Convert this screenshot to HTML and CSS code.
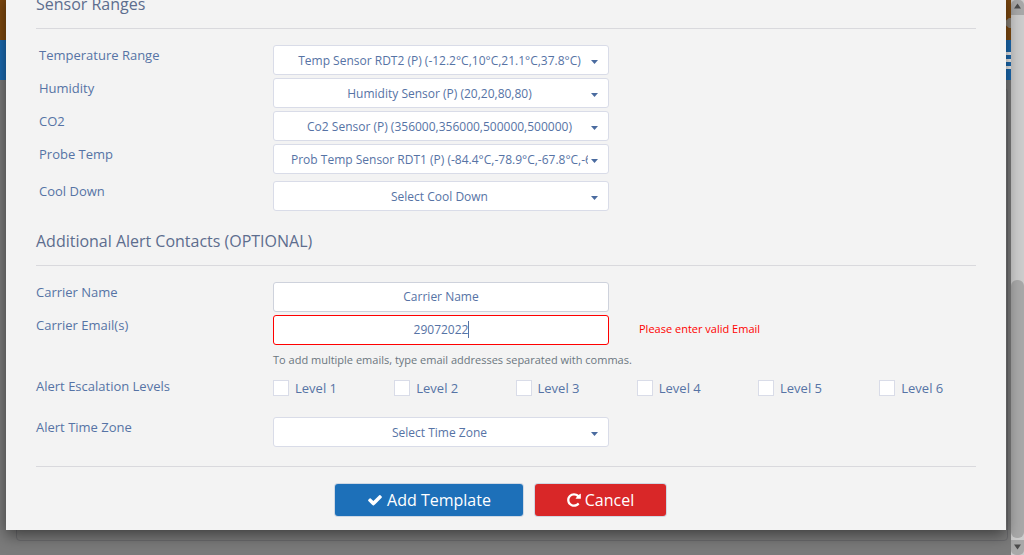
FILE: index.html
```html
<!DOCTYPE html>
<html lang="en">
<head>
<meta charset="utf-8">
<title>Add Template</title>
<link rel="stylesheet" href="styles.css">
</head>
<body>
<div class="page">
  <div class="topbar"><svg class="user" width="8" height="10" viewBox="0 0 8 10"><path d="M0 5L6 0H8V10H6Z" fill="#8b8277"/></svg></div>
  <div class="navbar"><span class="burger"><i></i><i></i><i></i></span></div>
  <div class="panel"></div>
</div>
<div class="scrollbar">
  <div class="sb-btn"><svg width="13" height="15" viewBox="0 0 13 15"><path d="M6.5 3.5L10 8.5H3Z" fill="#4c4c4c"/></svg></div>
  <div class="sb-thumb"></div>
  <div class="sb-btn sb-down"><svg width="13" height="15" viewBox="0 0 13 15"><path d="M3 4.500H10L6.500 9.500Z" fill="#4c4c4c"/></svg></div>
</div>
<main class="modal">
  <h2 class="title first">Sensor Ranges</h2>
  <section class="rows indent">
    <div class="row"><label>Temperature Range</label><div class="field select"><span>Temp Sensor RDT2 (P) (-12.2°C,10°C,21.1°C,37.8°C)</span></div></div>
    <div class="row"><label>Humidity</label><div class="field select"><span>Humidity Sensor (P) (20,20,80,80)</span></div></div>
    <div class="row"><label>CO2</label><div class="field select"><span>Co2 Sensor (P) (356000,356000,500000,500000)</span></div></div>
    <div class="row"><label>Probe Temp</label><div class="field select overflow"><span>Prob Temp Sensor RDT1 (P) (-84.4°C,-78.9°C,-67.8°C,-62.2°C)</span></div></div>
    <div class="row cool"><label>Cool Down</label><div class="field select"><span>Select Cool Down</span></div></div>
  </section>
  <h2 class="title">Additional Alert Contacts (OPTIONAL)</h2>
  <section class="rows">
    <div class="row"><label>Carrier Name</label><div class="field input"><span>Carrier Name</span></div></div>
    <div class="row"><label>Carrier Email(s)</label><div class="field input invalid"><span>29072022</span><b class="caret"></b></div><p class="error">Please enter valid Email</p></div>
  </section>
  <p class="help">To add multiple emails, type email addresses separated with commas.</p>
  <div class="row levels"><label>Alert Escalation Levels</label>
    <div class="checks">
      <span class="check"><i></i>Level 1</span><span class="check"><i></i>Level 2</span><span class="check"><i></i>Level 3</span><span class="check"><i></i>Level 4</span><span class="check"><i></i>Level 5</span><span class="check"><i></i>Level 6</span>
    </div>
  </div>
  <div class="row zone"><label>Alert Time Zone</label><div class="field select"><span>Select Time Zone</span></div></div>
  <footer class="actions">
    <button class="btn add"><svg width="16" height="16" viewBox="0 0 1792 1792"><path fill="#fff" d="M1671 566q0 40-28 68l-724 724-136 136q-28 28-68 28t-68-28l-136-136-362-362q-28-28-28-68t28-68l136-136q28-28 68-28t68 28l294 295 656-657q28-28 68-28t68 28l136 136q28 28 28 68z"/></svg><span>Add Template</span></button>
    <button class="btn cancel"><svg width="16" height="16" viewBox="0 0 1792 1792"><path fill="#fff" d="M1664 256v448q0 26-19 45t-45 19h-448q-42 0-59-40-17-39 14-69l138-138q-148-137-349-137-104 0-198.500 40.500t-163.500 109.500-109.500 163.500-40.500 198.500 40.500 198.500 109.500 163.500 163.500 109.500 198.500 40.500q119 0 225-52t179-147q7-10 23-12 15 0 25 9l137 138q9 8 9.500 20.500t-7.500 22.500q-109 132-264 204.500t-327 72.500q-156 0-298-61t-245-164-164-245-61-298 61-298 164-245 245-164 298-61q147 0 284.500 55.500t244.500 156.500l130-129q29-31 70-14 39 17 39 59z"/></svg><span>Cancel</span></button>
  </footer>
</main>
</body>
</html>
```
FILE: styles.css
```css
* { box-sizing: border-box; }
body { margin: 0; width: 1024px; height: 555px; overflow: hidden; position: relative; background: #7b7b7b; font-family: "Open Sans", sans-serif; font-size: 13px; color: #5673a5; }
.page { width: 1011px; height: 555px; background: #7b7b7b; overflow: hidden; }
.topbar { height: 40px; background: #804a0f; display: flex; justify-content: flex-end; padding: 18px 0 0; }
.navbar { height: 40px; background: #1b6bb3; display: flex; justify-content: flex-end; padding-top: 12px; }
.burger { display: flex; flex-direction: column; gap: 4px; width: 5px; }
.burger i { height: 3px; background: #f0f0f0; }
.panel { margin: 8px 3px 0 16px; height: 453px; border: 1px solid #6b6b6e; border-radius: 4px; }
.scrollbar { position: absolute; right: 0; top: 0; width: 13px; height: 555px; background: #cdcdcd; display: flex; flex-direction: column; }
.sb-btn { height: 15px; background: #a9a9a9; border-radius: 5px 5px 0 0; }
.sb-btn svg { display: block; }
.sb-down { border-radius: 0 0 5px 5px; margin-top: 2px; }
.sb-thumb { margin-top: 265px; height: 258px; border-radius: 6px; background: #a9a9a9; }
.modal { position: absolute; left: 6px; top: -8px; width: 1000px; height: 538px; background: #f3f3f3; padding: 0 30px; box-shadow: 0 5px 15px rgba(0,0,0,.5); }
.title { margin: 0; height: 55px; padding-top: 18px; border-bottom: 1px solid #d9d9dd; font-size: 16px; line-height: 24px; font-weight: 400; color: #5d6d8e; letter-spacing: -.01px; }
.title.first { height: 37px; padding-top: 0; }
.rows { padding-top: 16px; display: flex; flex-direction: column; gap: 3px; }
.row { display: grid; grid-template-columns: 237px 336px 1fr; height: 30px; }
.row.cool { margin-top: 4px; }
.row label { font-size: 13px; line-height: 20px; white-space: nowrap; }
.indent label { padding-left: 3px; }
.field { height: 30px; border: 1px solid #d9dce8; border-radius: 3px; background: #fff; font-size: 12px; line-height: 30px; text-align: center; position: relative; white-space: nowrap; overflow: hidden; }
.select { padding: 0 20px 0 17px; }
.select span { display: block; overflow: hidden; }
.overflow span { text-align: left; }
.select::after { content: ""; position: absolute; right: 10px; top: 14px; border: 3.5px solid transparent; border-top: 3.5px solid #4a6b9f; border-bottom: 0; }
.select::after { width: 7px; height: 4px; border: 0; background: #4a6b9f; clip-path: polygon(0 0, 100% 0, 50% 100%); }
.input { border-color: #ced2dc; line-height: 28px; }
.invalid { border-color: #f00; padding-left: 1px; }
.caret { display: inline-block; width: 1px; height: 17px; background: #5673a5; vertical-align: -4px; }
.error { margin: 0 0 0 30px; color: #f00; font-size: 11px; line-height: 28px; }
.help { margin: 7px 0 0 237px; font-size: 11px; line-height: 16px; color: #6b7680; }
.levels { margin-top: 8px; grid-template-columns: 237px 1fr; }
.checks { display: grid; grid-template-columns: repeat(6, 121.25px); padding-top: 4px; align-items: start; }
.check { display: flex; gap: 6px; line-height: 16px; }
.check i { width: 16px; height: 16px; border: 1px solid #d9dce8; background: #fff; }
.zone { margin-top: 11px; }
.actions { margin-top: 19px; border-top: 1px solid #d9d9dd; padding: 17px 0 0 299px; display: flex; gap: 12px; }
.btn { width: 188px; height: 32px; border: 0; border-radius: 3px; background: #1d70b9; color: #fff; font: 16px/32px "Open Sans", sans-serif; padding: 0; display: flex; align-items: center; justify-content: center; gap: 4px; box-shadow: 0 0 0 1px #cfd8e4; }
.cancel { width: 131px; background: #d92728; gap: 3px; padding-right: 1px; }
```
